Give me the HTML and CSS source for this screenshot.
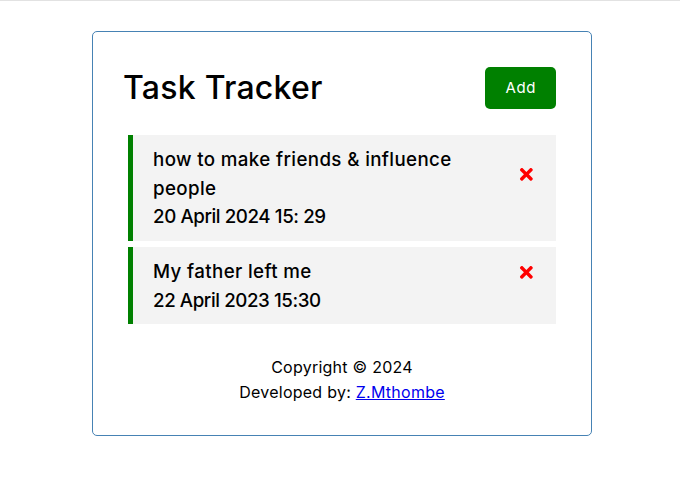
FILE: index.html
```html
<!DOCTYPE html>
<html lang="en">
<head>
<meta charset="utf-8">
<title>Task Tracker</title>
<link rel="stylesheet" href="styles.css">
</head>
<body>
<div class="container">
  <header class="header">
    <h1>Task Tracker</h1>
    <button class="btn">Add</button>
  </header>
  <div class="tasks">
    <div class="task reminder">
      <h3>how to make friends &amp; influence people
        <svg class="del" viewBox="0 0 352 512" aria-hidden="true"><path d="M242.72 256l100.07-100.07c12.28-12.28 12.28-32.19 0-44.48l-22.24-22.24c-12.28-12.28-32.19-12.28-44.48 0L176 189.28 75.93 89.21c-12.28-12.28-32.19-12.28-44.48 0L9.21 111.45c-12.28 12.28-12.28 32.19 0 44.48L109.28 256 9.21 356.07c-12.28 12.28-12.28 32.19 0 44.48l22.24 22.24c12.28 12.28 32.2 12.28 44.48 0L176 322.72l100.07 100.07c12.28 12.28 32.2 12.28 44.48 0l22.24-22.24c12.28-12.28 12.28-32.19 0-44.48L242.72 256z"/></svg>
      </h3>
      <p>20 April 2024 15: 29</p>
    </div>
    <div class="task reminder">
      <h3>My father left me
        <svg class="del" viewBox="0 0 352 512" aria-hidden="true"><path d="M242.72 256l100.07-100.07c12.28-12.28 12.28-32.19 0-44.48l-22.24-22.24c-12.28-12.28-32.19-12.28-44.48 0L176 189.28 75.93 89.21c-12.28-12.28-32.19-12.28-44.48 0L9.21 111.45c-12.28 12.28-12.28 32.19 0 44.48L109.28 256 9.21 356.07c-12.28 12.28-12.28 32.19 0 44.48l22.24 22.24c12.28 12.28 32.2 12.28 44.48 0L176 322.72l100.07 100.07c12.28 12.28 32.2 12.28 44.48 0l22.24-22.24c12.28-12.28 12.28-32.19 0-44.48L242.72 256z"/></svg>
      </h3>
      <p>22 April 2023 15:30</p>
    </div>
  </div>
  <footer class="footer">
    <p>Copyright &copy; 2024</p>
    <p>Developed by: <a href="#">Z.Mthombe</a></p>
  </footer>
</div>
</body>
</html>
```
FILE: styles.css
```css
* {
  box-sizing: border-box;
  margin: 0;
  padding: 0;
}

html {
  border-top: 1px solid #e2e2e2;
}

body {
  font-family: Inter, "Open Sans", "Liberation Sans", sans-serif;
  padding-left: 4px;
  color: #000;
}

.container {
  max-width: 500px;
  margin: 30px auto;
  min-height: 300px;
  border: 1px solid steelblue;
  padding: 30px;
  border-radius: 5px;
}

.header {
  display: flex;
  justify-content: space-between;
  align-items: center;
  margin-bottom: 21px;
}

.header h1 {
  font-size: 32px;
  font-weight: 500;
  line-height: 48px;
  letter-spacing: 0.25px;
}

.btn {
  background: green;
  color: #fff;
  border: none;
  padding: 10px 20px;
  margin: 5px;
  border-radius: 5px;
  font-family: inherit;
  font-size: 15px;
  line-height: 22px;
  letter-spacing: 0.6px;
  cursor: pointer;
}

.task {
  background: #f3f3f3;
  margin: 6px 5px;
  padding: 11px 20px 9px;
}

.task.reminder {
  border-left: 5px solid green;
}

.task h3,
.task p {
  font-size: 18.72px;
  font-weight: 500;
  line-height: 28.67px;
}

.task h3 {
  display: flex;
  align-items: center;
  justify-content: space-between;
  letter-spacing: 0.38px;
}

.task p {
  letter-spacing: -0.4px;
}

.del {
  width: 18.72px;
  height: 18.72px;
  fill: red;
  flex: none;
  margin-left: 20px;
}

.footer {
  margin-top: 31px;
  text-align: center;
  font-size: 16px;
  line-height: 25px;
  letter-spacing: 0.25px;
}

.footer a {
  color: #0000ee;
}
```
